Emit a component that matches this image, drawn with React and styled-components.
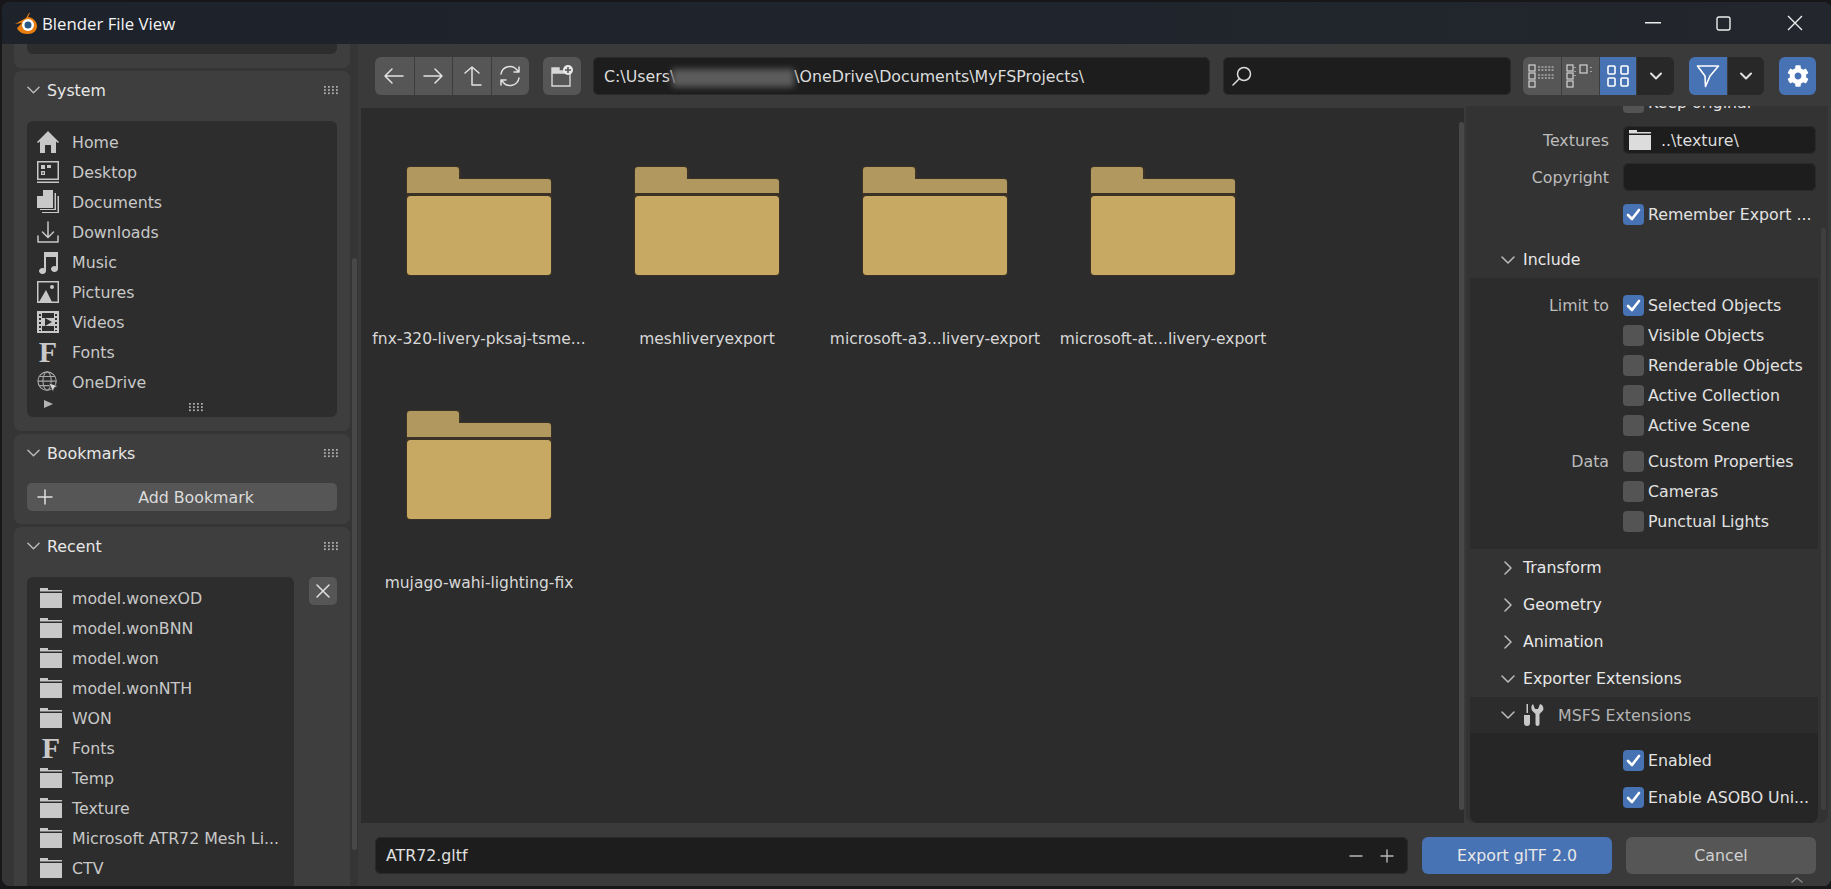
import React from "react";
import styled, { createGlobalStyle } from "styled-components";
import { FaCog } from "react-icons/fa";

const Global = createGlobalStyle`
  html, body { margin: 0; padding: 0; background: #1a1a1c; overflow: hidden; }
  body { font-family: "DejaVu Sans", sans-serif; font-size: 15.8px; color: #d0d0d0; }
  * { box-sizing: border-box; }
`;

const Root = styled.div`
  width: 1831px; height: 889px; padding: 2px 0 3px 2px; background: #17171a; overflow: hidden;
`;
const Win = styled.div`
  width: 100%; height: 100%; display: flex; flex-direction: column;
  background: #383838; border-radius: 8px; overflow: hidden;
`;
const TitleBar = styled.header`
  flex: none; height: 42px; display: flex; align-items: center; padding: 0 1px 0 12px;
  background: linear-gradient(90deg, #1d222b, #20252d 60%, #23262c);
`;
const TitleText = styled.span`
  font-family: "Open Sans", sans-serif; font-size: 16.8px; color: #f4f4f4; margin-left: 4px; flex: 1;
`;
const WinBtn = styled.button`
  width: 71px; height: 42px; border: 0; padding: 0; background: transparent; color: #eee;
  display: flex; align-items: center; justify-content: center;
`;
const Body = styled.div` flex: 1; display: flex; min-height: 0; `;
const Sidebar = styled.aside`
  position: relative; flex: none; width: 356px; padding: 0 8px 0 12px; display: flex; flex-direction: column;
  gap: 3px; overflow: hidden; background: #353535;
`;
const SideScroll = styled.div`
  position: absolute; left: 350px; top: 214px; width: 5px; height: 592px; border-radius: 3px; background: #484848;
`;
const Panel = styled.section`
  flex: none; background: #3e3e3e; padding: 0 13px ${p => p.$pb ?? 13}px;
  height: ${p => (p.$h ? p.$h + "px" : "auto")};
  border-radius: ${p => (p.$stub ? "0 0 7px 7px" : "7px")};
`;
const Stub = styled.div` height: 10px; background: #2d2d2d; border-radius: 0 0 6px 6px; `;
const PanelHead = styled.div`
  height: 38px; display: flex; align-items: center; gap: 7px; color: #e8e8e8; margin-right: -1px;
`;
const HeadTitle = styled.span` flex: 1; `;
const HeadChevron = styled.span` width: 13px; display: flex; color: #bcbcbc; `;
const ListBox = styled.div`
  margin-top: ${p => p.$mt ?? 12}px; background: #2d2d2d; border-radius: 6px; padding: 6px 0 0 ${p => p.$pl ?? 10}px;
  height: ${p => (p.$h ? p.$h + "px" : "auto")}; overflow: hidden; flex: 1;
`;
const ListRow = styled.div`
  height: 30px; display: flex; align-items: center; gap: ${p => p.$gap ?? 13}px; color: #c8c8c8; white-space: nowrap;
`;
const IconSlot = styled.span`
  width: 22px; height: 24px; display: flex; align-items: center; justify-content: center; color: #c8c8c8; flex: none;
`;
const SerifF = styled.span`
  font-family: "Liberation Serif", serif; font-weight: 700; font-size: 30px; line-height: 24px; color: #c8c8c8;
`;
const ListFoot = styled.div`
  height: 20px; display: flex; align-items: center; justify-content: center; position: relative; padding-left: 18px;
`;
const Triangle = styled.span`
  position: absolute; left: 7px; top: 3px; width: 0; height: 0;
  border-left: 9px solid #b4b4b4; border-top: 4px solid transparent; border-bottom: 4px solid transparent;
`;
const WideBtn = styled.button`
  position: relative; width: 100%; height: 28px; margin-top: 11px; border: 0; border-radius: 5px; background: #565656;
  color: #dcdcdc; font: inherit; display: block; text-align: center; padding: 0 0 0 28px;
`;
const PlusAbs = styled.span` position: absolute; left: 10px; top: 6px; display: flex; color: #e0e0e0; `;
const RecentWrap = styled.div` display: flex; gap: 15px; align-items: flex-start; margin-top: 12px; `;
const RecentList = styled(ListBox)` width: 267px; flex: none; margin-top: 0; `;
const SquareBtn = styled.button`
  width: 28px; height: 28px; border: 0; padding: 0; border-radius: 5px; background: #565656; color: #e0e0e0;
  display: flex; align-items: center; justify-content: center;
`;
const Main = styled.main` flex: 1; min-width: 0; display: flex; flex-direction: column; background: #3a3a3a; `;
const Toolbar = styled.div`
  flex: none; height: 62px; padding: 13px 15px 0 17px; display: flex; align-items: flex-start;
`;
const Group = styled.div`
  display: flex; height: 38px; border-radius: 6px; overflow: hidden; flex: none; margin-left: ${p => p.$ml ?? 0}px;
`;
const Seg = styled.button`
  width: ${p => p.$w ?? 38.5}px; height: 38px; border: 0; padding: 0; color: #e2e2e2; display: flex;
  align-items: center; justify-content: center;
  background: ${p => (p.$blue ? "#4772b3" : p.$dark ? "#282828" : "#565656")};
  & + & { border-left: 1px solid #3c3c3c; }
`;
const Field = styled.div`
  height: ${p => p.$h ?? 38}px; background: #1d1d1d; border-radius: 6px; display: flex; align-items: center;
  color: #dcdcdc; white-space: nowrap; overflow: hidden; box-shadow: inset 0 0 0 1px #2a2a2a;
  flex: ${p => (p.$grow ? 1 : "none")}; width: ${p => (p.$w ? p.$w + "px" : "auto")};
  margin-left: ${p => p.$ml ?? 0}px; padding: 0 ${p => p.$pr ?? 12}px 0 ${p => p.$pl ?? 11}px;
`;
const Redact = styled.span`
  display: inline-block; width: 122px; height: 18px; margin: 4px 0 0 -3px; background: #5c5c5c; filter: blur(3px); flex: none;
`;
const Content = styled.div` flex: 1; min-height: 0; display: flex; padding-left: 3px; `;
const FileArea = styled.div`
  position: relative; flex: 1; margin-top: 2px; background: #2c2c2c; padding: 59px 0 0 4px;
  display: grid; grid-template-columns: repeat(auto-fill, 228px); grid-auto-rows: 244px; align-content: start;
`;
const VScroll = styled.div`
  position: absolute; right: 0; top: 14px; bottom: 13px; width: 5px; border-radius: 3px; background: #484848;
`;
const Tile = styled.div` display: flex; flex-direction: column; align-items: center; `;
const TileLabel = styled.div`
  margin-top: 54px; height: 20px; line-height: 20px; white-space: nowrap; color: #d8d8d8; font-size: 15.5px;
`;
const RightPanel = styled.aside`
  position: relative; flex: none; width: 362px; margin: 0 3px 0 2px; background: #333; border-radius: 0 0 8px 8px;
  overflow: hidden; display: flex; flex-direction: column; --label: 143px;
`;
const PropRow = styled.div`
  flex: none; height: 28px; display: grid; grid-template-columns: var(--label) 1fr; column-gap: 14px; align-items: center;
  margin-top: ${p => p.$mt ?? 0}px; margin-right: 12px;
`;
const PropLabel = styled.span` text-align: right; color: #bcbcbc; white-space: nowrap; `;
const CheckWrap = styled.span`
  display: flex; align-items: center; gap: 4px; white-space: nowrap; color: #e2e2e2;
`;
const Box = styled.span`
  width: 21px; height: 21px; flex: none; border-radius: 4px; display: flex; align-items: center; justify-content: center;
  background: ${p => (p.$on ? "#4772b3" : "#545454")}; color: #fff;
`;
const SectionHead = styled.div`
  flex: none; height: ${p => p.$h ?? 37}px; display: flex; align-items: center; color: #e8e8e8; padding-left: 35px;
`;
const ChevSlot = styled.span` width: 22px; flex: none; display: flex; color: #bcbcbc; `;
const SubPanel = styled.div`
  flex: none; margin: 0 10px 0 4px; background: #2c2c2c; padding: 12px 0 13px; --label: 139px;
`;
const SubRow = styled(PropRow)` height: 30px; margin-right: 0; `;
const MsfsWrap = styled.div`
  flex: 1; margin: 0 10px 0 4px; background: #262626; border-radius: 0 0 8px 8px; padding-top: 9px; --label: 139px;
`;
const MsfsHead = styled.div`
  flex: none; height: 36px; margin: 0 10px 0 4px; background: #2c2c2c; display: flex; align-items: center; padding-left: 31px; color: #b4b4b4;
`;
const MsfsTitle = styled.span` margin-left: 13px; `;
const FieldText = styled.span` margin-left: 10px; `;
const MsfsRow = styled(PropRow)` height: 37px; margin-right: 0; `;
const Spacer = styled.div` flex: none; height: 13px; `;
const PanelScroll = styled.div`
  position: absolute; right: 2px; top: 122px; bottom: 13px; width: 5px; border-radius: 3px; background: #3f3f3f;
`;
const Footer = styled.footer`
  flex: none; height: 63px; padding: 14px 15px 0 17px; display: flex; gap: 14px; background: #3a3a3a; position: relative;
`;
const FootField = styled(Field)` flex: 1; justify-content: space-between; padding-right: 14px; color: #e0e0e0; `;
const FootActions = styled.span` display: flex; gap: 17px; align-items: center; color: #b8b8b8; `;
const ActionBtn = styled.button`
  width: 190px; height: 37px; border: 0; border-radius: 6px; font: inherit; padding: 0;
  background: ${p => (p.$primary ? "#4772b3" : "#565656")}; color: ${p => (p.$primary ? "#e8e8e8" : "#d0d0d0")};
`;
const CornerMark = styled.span` position: absolute; right: 27px; bottom: -1px; display: flex; color: #8a8a8a; `;

const Stroke = ({ s = 20, vb = 24, w = 1.6, children }) => (
  <svg width={s} height={s} viewBox={`0 0 ${vb} ${vb}`} fill="none" stroke="currentColor" strokeWidth={w} strokeLinecap="round" strokeLinejoin="round">{children}</svg>
);
const Fill = ({ w = 22, h = 24, vb = "0 0 22 24", children }) => (
  <svg width={w} height={h} viewBox={vb} fill="currentColor">{children}</svg>
);
const ChevDown = () => <Stroke s={14} vb={14} w={1.5}><path d="M1 4l6 6 6-6" /></Stroke>;
const ChevRight = () => <Stroke s={14} vb={14} w={1.5}><path d="M4 1l6 6-6 6" /></Stroke>;
const Grip = () => (
  <svg width="14" height="9" viewBox="0 0 14 9" fill="#b0b0b0">
    {[0, 1, 2].flatMap(r => [0, 1, 2, 3].map(c => <rect key={r + "-" + c} x={c * 4} y={r * 3.2} width="1.8" height="1.7" />))}
  </svg>
);
const Logo = () => (
  <svg width="24" height="22" viewBox="0 0 24 22">
    <path d="M15 1 12 6 1 12l7-1-5 5c2 5 7 6 11 6 5 0 9-3 9-8 0-5-5-9-9-9l2-4z" fill="#e87d0d" />
    <circle cx="14" cy="13" r="6" fill="#fff" />
    <circle cx="14" cy="13" r="3.5" fill="#265787" />
  </svg>
);
const Home = () => <Fill><path d="M11 1 22 12l-1 1-2-1.5V23h-5v-8H8v8H3V11.5L1 13l-1-1z" /></Fill>;
const Desktop = () => (
  <Fill><path fillRule="evenodd" d="M0 1h22v19H0zM1.5 2.5v16h19v-16zM0 21.5h22V23H0z" /><path d="M4 5h4v4H4zM10 5h4v3h-4zM4 11h4v4H4zM5.3 12.3v1.5h1.5v-1.5z" /></Fill>
);
const Docs = () => (
  <Fill>
    <path d="M6 0h10v18H0V6h6z" />
    <path d="M17.500 3H19v17H3v-1h14.500z" />
    <path d="M20.500 6H22v17H5v-1h15.500z" />
  </Fill>
);
const Download = () => (
  <Stroke s={22} vb={22} w={1.5}><path d="M11 1v15M5.5 11l5.5 5.5 5.5-5.5M1 15v6h20v-6" /></Stroke>
);
const Music = () => (
  <Fill><path d="M7 2h14v17a3.5 3 0 1 1-2-2.7V7H9v14a3.5 3 0 1 1-2-2.7z" /></Fill>
);
const Pictures = () => (
  <Fill><path fillRule="evenodd" d="M0 1h22v22H0zM1.5 2.5v19h19v-19z" /><circle cx="15" cy="7" r="2" /><path d="M2 22 9 10l6 12z" /></Fill>
);
const Video = () => (
  <Fill>
    <path fillRule="evenodd" d="M0 1h22v22H0zM2 4v2h2V4zm0 4v2h2V8zm0 4v2h2v-2zm0 4v2h2v-2zm0 4v1h2v-1zM18 4v2h2V4zm0 4v2h2V8zm0 4v2h2v-2zm0 4v2h2v-2zm0 4v1h2v-1zM5 3v5h12V3zM5 16v5h12v-5z" />
    <path d="M8 8v8l7-4z" fill="#2d2d2d" />
  </Fill>
);
const Globe = () => (
  <svg width="24" height="24" viewBox="0 0 24 24" fill="none" stroke="#a8a8a8" strokeWidth="1.2">
    <circle cx="11" cy="11" r="10" /><ellipse cx="11" cy="11" rx="4.5" ry="10" /><path d="M1 11h20M2.5 6h17M2.5 16h17" />
    <path d="M13 13l10 3.5-4 1.5-1.5 5z" fill="#d8d8d8" stroke="#2d2d2d" strokeWidth=".8" />
  </svg>
);
const SmallFolder = () => (
  <Fill h={20} vb="0 0 22 20">
    <path d="M0 0h8v2h14v1.6H0z" /><path d="M0 5h22v15H0z" />
  </Fill>
);
const BigFolder = () => (
  <svg width="144" height="108" viewBox="0 0 144 108" style={{ overflow: "visible" }}>
    <path d="M-1 25V3a4 4 0 0 1 4-4h47a4 4 0 0 1 4 4v8h87a4 4 0 0 1 4 4v17H-1z" fill="#3a3226" />
    <rect x="-1" y="27" width="146" height="82" rx="4" fill="#3a3226" />
    <path d="M0 26V3a3 3 0 0 1 3-3h46a3 3 0 0 1 3 3v9h89a3 3 0 0 1 3 3v11z" fill="#b0985f" />
    <rect x="0" y="29" width="144" height="79" rx="3.5" fill="#c7a964" />
  </svg>
);
const Tick = () => <Stroke s={17} vb={17} w={2.6}><path d="M3 9l4 4 7-9" /></Stroke>;
const Search = () => <Stroke s={22} vb={22} w={1.5}><circle cx="13" cy="9" r="6.5" /><path d="M8.5 13.5 2 20" /></Stroke>;
const ListView = ({ two }) => (
  <svg width="28" height="26" viewBox="0 0 28 26" fill="none" stroke="#d4d4d4" strokeWidth="1.2">
    <rect x="1" y="2" width="6" height="6" /><rect x="1" y="10" width="6" height="6" /><rect x="1" y="18" width="6" height="6" />
    {two ? (
      <g><rect x="14" y="2" width="7" height="8" /><path d="M9 4v1M9 8v1M9 12v1M25 4v1M25 8v1" strokeDasharray="1 1" /></g>
    ) : (
      <path d="M10 4h16M10 7h16M10 12h16M10 15h16" strokeDasharray="2 1.4" />
    )}
  </svg>
);
const GridView = () => (
  <svg width="22" height="22" viewBox="0 0 22 22" fill="none" stroke="#fff" strokeWidth="1.6">
    <rect x="1" y="1" width="7" height="8" rx="1" /><rect x="14" y="1" width="7" height="8" rx="1" />
    <rect x="1" y="13" width="7" height="8" rx="1" /><rect x="14" y="13" width="7" height="8" rx="1" />
  </svg>
);
const Funnel = () => (
  <svg width="24" height="24" viewBox="0 0 24 24" fill="none" stroke="#fff" strokeWidth="1.6" strokeLinejoin="round">
    <path d="M1.5 2h21L14 12l-4.500 10.500L9 12z" />
  </svg>
);
const Msfs = () => (
  <svg width="22" height="22" viewBox="0 0 22 22" fill="#c8c8c8">
    <path d="M3.500 0h1.500v9H3.500zM1 11h6v8a3 3 0 0 1-6 0z" />
    <path d="M10 0l2 5h3l2-5c3 1 4 4 3 6.500L16.500 10v10a2 2 0 0 1-4 0V10L9 6.500C8 4 8 1.500 10 0z" />
  </svg>
);

const systemItems = [
  ["Home", <Home />], ["Desktop", <Desktop />], ["Documents", <Docs />], ["Downloads", <Download />],
  ["Music", <Music />], ["Pictures", <Pictures />], ["Videos", <Video />], ["Fonts", <SerifF>F</SerifF>], ["OneDrive", <Globe />],
];
const recent = ["model.wonexOD", "model.wonBNN", "model.won", "model.wonNTH", "WON", "Fonts", "Temp", "Texture", "Microsoft ATR72 Mesh Li...", "CTV"];
const files = ["fnx-320-livery-pksaj-tsme...", "meshliveryexport", "microsoft-a3...livery-export", "microsoft-at...livery-export", "mujago-wahi-lighting-fix"];
const limitTo = [["Limit to", "Selected Objects", true], ["", "Visible Objects"], ["", "Renderable Objects"], ["", "Active Collection"], ["", "Active Scene"]];
const data = [["Data", "Custom Properties"], ["", "Cameras"], ["", "Punctual Lights"]];

const Check = ({ on, children }) => (
  <CheckWrap><Box $on={on}>{on && <Tick />}</Box>{children}</CheckWrap>
);
const Section = ({ open, children }) => (
  <SectionHead><ChevSlot>{open ? <ChevDown /> : <ChevRight />}</ChevSlot>{children}</SectionHead>
);
const Head = ({ children }) => (
  <PanelHead><HeadChevron><ChevDown /></HeadChevron><HeadTitle>{children}</HeadTitle><Grip /></PanelHead>
);
const Caret = () => <Stroke s={16} vb={16} w={2}><path d="M3 5.500l5 5 5-5" /></Stroke>;

export default function App() {
  return (
    <Root>
      <Global />
      <Win>
        <TitleBar>
          <Logo />
          <TitleText>Blender File View</TitleText>
          <WinBtn><svg width="16" height="2"><rect width="16" height="1.500" fill="#eee" /></svg></WinBtn>
          <WinBtn><svg width="15" height="15" fill="none" stroke="#eee" strokeWidth="1.400"><rect x="1" y="1" width="13" height="13" rx="2" /></svg></WinBtn>
          <WinBtn><svg width="16" height="16" stroke="#eee" strokeWidth="1.400"><path d="M1 1l14 14M15 1 1 15" /></svg></WinBtn>
        </TitleBar>
        <Body>
          <Sidebar>
            <Panel $h={24} $stub $pb={0}><Stub /></Panel>
            <Panel $h={360}>
              <Head>System</Head>
              <ListBox>
                {systemItems.map(([t, i]) => (
                  <ListRow key={t}><IconSlot>{i}</IconSlot>{t}</ListRow>
                ))}
                <ListFoot><Triangle /><Grip /></ListFoot>
              </ListBox>
            </Panel>
            <Panel $h={90}>
              <Head>Bookmarks</Head>
              <WideBtn>
                <PlusAbs><Stroke s={16} vb={16} w={1.500}><path d="M8 1v14M1 8h14" /></Stroke></PlusAbs>
                Add Bookmark
              </WideBtn>
            </Panel>
            <Panel $pb={0}>
              <Head>Recent</Head>
              <RecentWrap>
                <RecentList $pl={13} $h={320}>
                  {recent.map(t => (
                    <ListRow key={t} $gap={10}>
                      <IconSlot>{t === "Fonts" ? <SerifF>F</SerifF> : <SmallFolder />}</IconSlot>{t}
                    </ListRow>
                  ))}
                </RecentList>
                <SquareBtn><Stroke s={16} vb={16} w={1.500}><path d="M2 2l12 12M14 2 2 14" /></Stroke></SquareBtn>
              </RecentWrap>
            </Panel>
            <SideScroll />
          </Sidebar>
          <Main>
            <Toolbar>
              <Group>
                <Seg><Stroke s={22} vb={22} w={1.500}><path d="M20 11H2M9 4l-7 7 7 7" /></Stroke></Seg>
                <Seg><Stroke s={22} vb={22} w={1.500}><path d="M2 11h18M13 4l7 7-7 7" /></Stroke></Seg>
                <Seg><Stroke s={22} vb={22} w={1.500}><path d="M11 20V2M4 8l7-6 7 6M11 20h9" /></Stroke></Seg>
                <Seg><Stroke s={24} vb={24} w={1.500}><path d="M3 10a9 9 0 0 1 16-4l2 2M21 3v5h-5M21 14a9 9 0 0 1-16 4l-2-2M3 21v-5h5" /></Stroke></Seg>
              </Group>
              <Group $ml={14}>
                <Seg $w={38}>
                  <svg width="24" height="24" viewBox="0 0 24 24" fill="none" stroke="#d8d8d8" strokeWidth="1.400">
                    <path d="M2 9v13h18V9" /><path d="M2 4h7v3h5v2H2z" fill="#d8d8d8" />
                    <circle cx="18" cy="6" r="5" fill="#e8e8e8" stroke="none" /><path d="M18 3v6M15 6h6" stroke="#555" strokeWidth="1.500" />
                  </svg>
                </Seg>
              </Group>
              <Field $grow $ml={12}>C:\Users\<Redact />\OneDrive\Documents\MyFSProjects\</Field>
              <Field $w={288} $ml={13} $pl={8}><Search /></Field>
              <Group $ml={12}>
                <Seg $w={37.75}><ListView /></Seg>
                <Seg $w={37.75}><ListView two /></Seg>
                <Seg $w={37.75} $blue><GridView /></Seg>
                <Seg $w={37.75} $dark><Caret /></Seg>
              </Group>
              <Group $ml={15}>
                <Seg $w={37.5} $blue><Funnel /></Seg>
                <Seg $w={37.5} $dark><Caret /></Seg>
              </Group>
              <Group $ml={15}>
                <Seg $blue $w={37}><FaCog size={22} color="#fff" /></Seg>
              </Group>
            </Toolbar>
            <Content>
              <FileArea>
                {files.map(f => (
                  <Tile key={f}><BigFolder /><TileLabel>{f}</TileLabel></Tile>
                ))}
                <VScroll />
              </FileArea>
              <RightPanel>
                <PropRow $mt={-18}>
                  <span />
                  <Check>Keep original</Check>
                </PropRow>
                <PropRow $mt={10}>
                  <PropLabel>Textures</PropLabel>
                  <Field $h={28} $pl={6}><SmallFolder /><FieldText>..\texture\</FieldText></Field>
                </PropRow>
                <PropRow $mt={9}>
                  <PropLabel>Copyright</PropLabel>
                  <Field $h={28} />
                </PropRow>
                <PropRow $mt={9}>
                  <span />
                  <Check on>Remember Export ...</Check>
                </PropRow>
                <Spacer />
                <Section open>Include</Section>
                <SubPanel>
                  {limitTo.map(([l, t, on]) => (
                    <SubRow key={t}><PropLabel>{l}</PropLabel><Check on={on}>{t}</Check></SubRow>
                  ))}
                  {data.map(([l, t], i) => (
                    <SubRow key={t} $mt={i === 0 ? 6 : 0}><PropLabel>{l}</PropLabel><Check>{t}</Check></SubRow>
                  ))}
                </SubPanel>
                <Section>Transform</Section>
                <Section>Geometry</Section>
                <Section>Animation</Section>
                <Section open>Exporter Extensions</Section>
                <MsfsHead>
                  <ChevSlot><ChevDown /></ChevSlot>
                  <Msfs />
                  <MsfsTitle>MSFS Extensions</MsfsTitle>
                </MsfsHead>
                <MsfsWrap>
                  <MsfsRow><span /><Check on>Enabled</Check></MsfsRow>
                  <MsfsRow><span /><Check on>Enable ASOBO Uni...</Check></MsfsRow>
                </MsfsWrap>
                <PanelScroll />
              </RightPanel>
            </Content>
            <Footer>
              <FootField $h={37} $pl={11}>
                ATR72.gltf
                <FootActions>
                  <Stroke s={14} vb={14} w={1.400}><path d="M1 7h12" /></Stroke>
                  <Stroke s={14} vb={14} w={1.400}><path d="M1 7h12M7 1v12" /></Stroke>
                </FootActions>
              </FootField>
              <ActionBtn $primary>Export glTF 2.0</ActionBtn>
              <ActionBtn>Cancel</ActionBtn>
              <CornerMark><Stroke s={14} vb={14} w={1.500}><path d="M2 9l5-4 5 4" /></Stroke></CornerMark>
            </Footer>
          </Main>
        </Body>
      </Win>
    </Root>
  );
}
